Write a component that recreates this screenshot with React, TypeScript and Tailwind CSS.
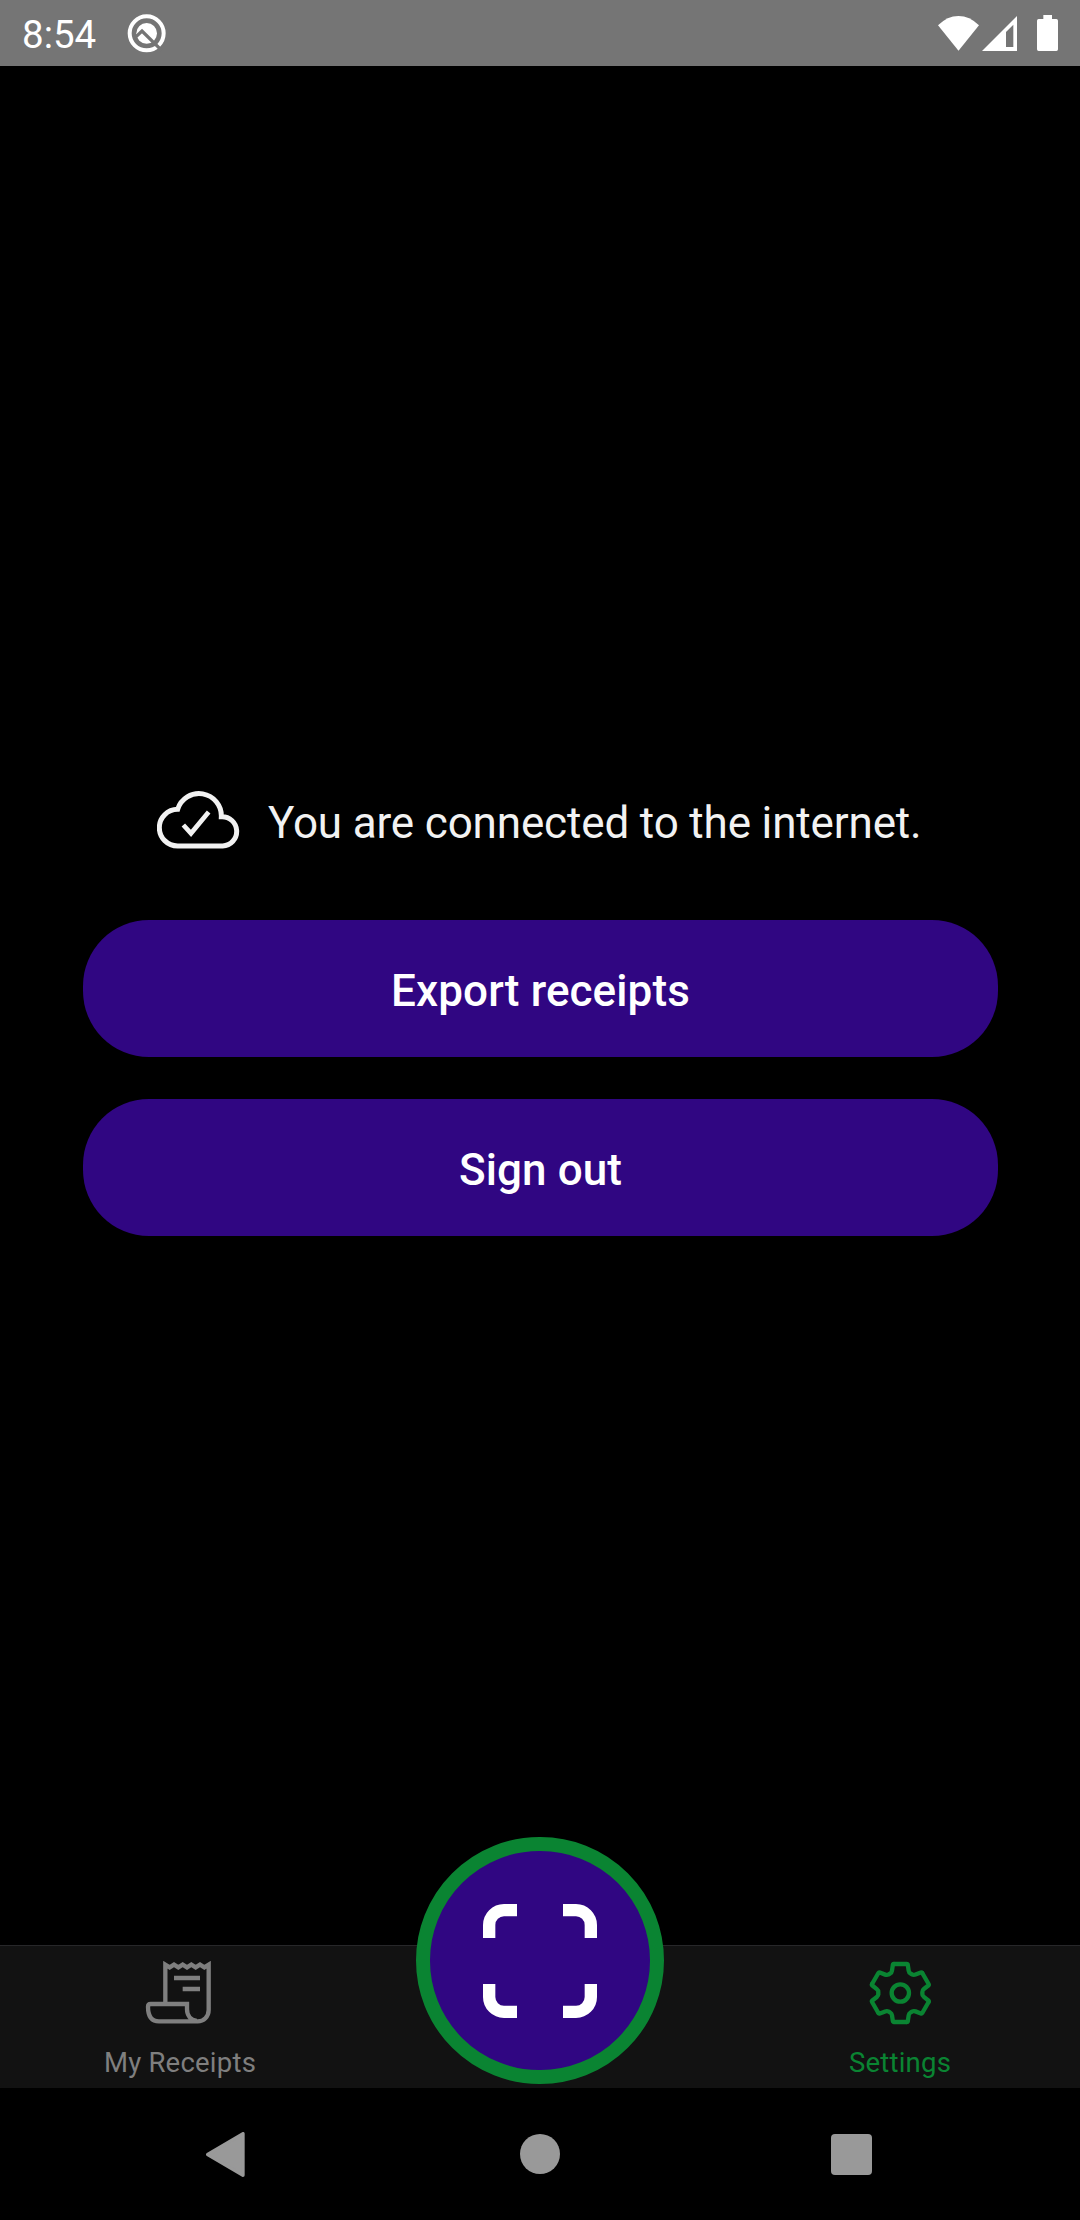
import React from "react";

const GEAR_TOOTH =
  "M-19 -87 H19 Q22 -87 22.5 -84 L25 -67 Q26 -61 30 -59 L36.1 -55.5 Q39.8 -53 45.5 -55.2 L61.5 -61.5 Q64.3 -62.5 65.8 -60";

function StatusBar() {
  return (
    <header className="flex h-[66px] shrink-0 items-center bg-[#757575] pl-[22px] pr-[22px] text-white">
      <span className="pt-[3px] text-[38.5px] leading-[45px]">8:54</span>
      <svg className="ml-[31px] h-[39px] w-[39px]" viewBox="380 41 117 117">
        <circle cx="439" cy="99" r="51" fill="none" stroke="white" strokeWidth="12" />
        <circle cx="439" cy="99" r="31" fill="white" />
        <path d="M404 112 L425 92 L484 150" fill="none" stroke="#757575" strokeWidth="10" />
      </svg>
      <svg className="ml-auto h-[35px] w-[41px]" viewBox="114 45 123 105">
        <path d="M114 73 Q142 45 175.5 45 Q209 45 237 73 L175.5 149 Z" fill="white" />
      </svg>
      <svg className="ml-[3px] h-[35px] w-[35px]" viewBox="246 45 105 105">
        <path d="M246 150 L351 45 V150 Z M318 93 V138 H340 V71 Z" fill="white" fillRule="evenodd" />
      </svg>
      <svg className="ml-[20px] h-[36px] w-[21px]" viewBox="411 45 63 108">
        <path d="M430 45 H456 V57 H469 Q474 57 474 62 V148 Q474 153 469 153 H416 Q411 153 411 148 V62 Q411 57 416 57 H430 Z" fill="white" />
      </svg>
    </header>
  );
}

function CloudCheck() {
  return (
    <svg className="h-[60px] w-[84px] shrink-0" viewBox="51 60 252 180" fill="none" stroke="#f2f2f2" strokeWidth="15">
      <path d="M113 228 A55 55 0 0 1 113 118 A67 67 0 0 1 244 140 A44 44 0 0 1 248 228 Z" />
      <path d="M130 165 L153 190 L206 126" strokeWidth="14" />
    </svg>
  );
}

function ReceiptIcon() {
  return (
    <svg className="mr-[2px] h-[64px] w-[68px]" viewBox="195 93 204 192" fill="none" stroke="#7f7f7f" strokeWidth="13">
      <path d="M256 222 V104 L269 112 L282 104 L295 112 L308 104 L321 112 L334 104 L347 112 L360 104 L373 112 L386 104 V240 C386 260 371 274 353 274 H237 C212 274 204 254 204 230 Q204 222 212 222 H321 V238 C321 256 332 270 350 273" />
      <path d="M282 144 H360 M308 177 H360" />
    </svg>
  );
}

function GearIcon() {
  return (
    <svg className="h-[64px] w-[64px]" viewBox="-97 -96 192 192" fill="none" stroke="#0a8432" strokeWidth="13">
      {[0, 60, 120, 180, 240, 300].map((angle) => (
        <path key={angle} d={GEAR_TOOTH} transform={`rotate(${angle})`} strokeLinecap="round" />
      ))}
      <circle r="26" />
    </svg>
  );
}

function ScanButton() {
  return (
    <button
      aria-label="Scan"
      className="absolute -top-[109px] left-[416px] flex h-[247px] w-[248px] items-center justify-center rounded-full border-[14px] border-[#0a8432] bg-[#300682]"
    >
      <svg className="h-[114px] w-[114px]" viewBox="0 0 342 342" fill="none" stroke="white" strokeWidth="37">
        <path d="M18.5 102 V63 A44.5 44.5 0 0 1 63 18.5 H102 M240 18.5 H279 A44.5 44.5 0 0 1 323.5 63 V102 M323.5 240 V279 A44.5 44.5 0 0 1 279 323.5 H240 M102 323.5 H63 A44.5 44.5 0 0 1 18.5 279 V240" />
      </svg>
    </button>
  );
}

function ActionButton({ label }: { label: string }) {
  return (
    <button className="flex h-[137px] w-[915px] items-center justify-center rounded-[66px] bg-[#300682] pt-[5px] text-[44px] leading-[52px] font-medium tracking-[0.1px] text-white">
      {label}
    </button>
  );
}

export default function App() {
  return (
    <div className="flex h-[2220px] w-[1080px] flex-col overflow-hidden bg-black font-['Roboto',sans-serif]">
      <StatusBar />
      <main className="flex min-h-0 flex-1 flex-col items-center pt-[724px]">
        <div className="flex h-[60px] w-[766px] items-center gap-[27px]">
          <CloudCheck />
          <p className="whitespace-nowrap pt-[6px] text-[44px] leading-[52px] tracking-[-0.15px] text-[#f2f2f2]">
            You are connected to the internet.
          </p>
        </div>
        <div className="mt-[70px] ml-px flex flex-col gap-[42px]">
          <ActionButton label="Export receipts" />
          <ActionButton label="Sign out" />
        </div>
      </main>
      <nav className="relative grid h-[143px] shrink-0 grid-cols-3 border-t border-[#272729] bg-[#121212] text-[27.5px] leading-[32px] tracking-[0.22px]">
        <div className="flex flex-col items-center pt-[15px] text-[#7f7f7f]">
          <ReceiptIcon />
          <span className="mt-[22px]">My Receipts</span>
        </div>
        <div />
        <div className="flex flex-col items-center pt-[15px] text-[#0a8432]">
          <GearIcon />
          <span className="mt-[22px]">Settings</span>
        </div>
        <ScanButton />
      </nav>
      <footer className="flex h-[132px] shrink-0 items-center justify-between pl-[206px] pr-[208px]">
        <svg className="h-[45px] w-[39px]" viewBox="79 96 117 135">
          <path d="M84 163.500 L190 101 V226 Z" fill="#999999" stroke="#999999" strokeWidth="10" strokeLinejoin="round" />
        </svg>
        <div className="ml-[4px] size-[40px] rounded-full bg-[#999999]" />
        <div className="size-[41px] rounded-[4px] bg-[#999999]" />
      </footer>
    </div>
  );
}
